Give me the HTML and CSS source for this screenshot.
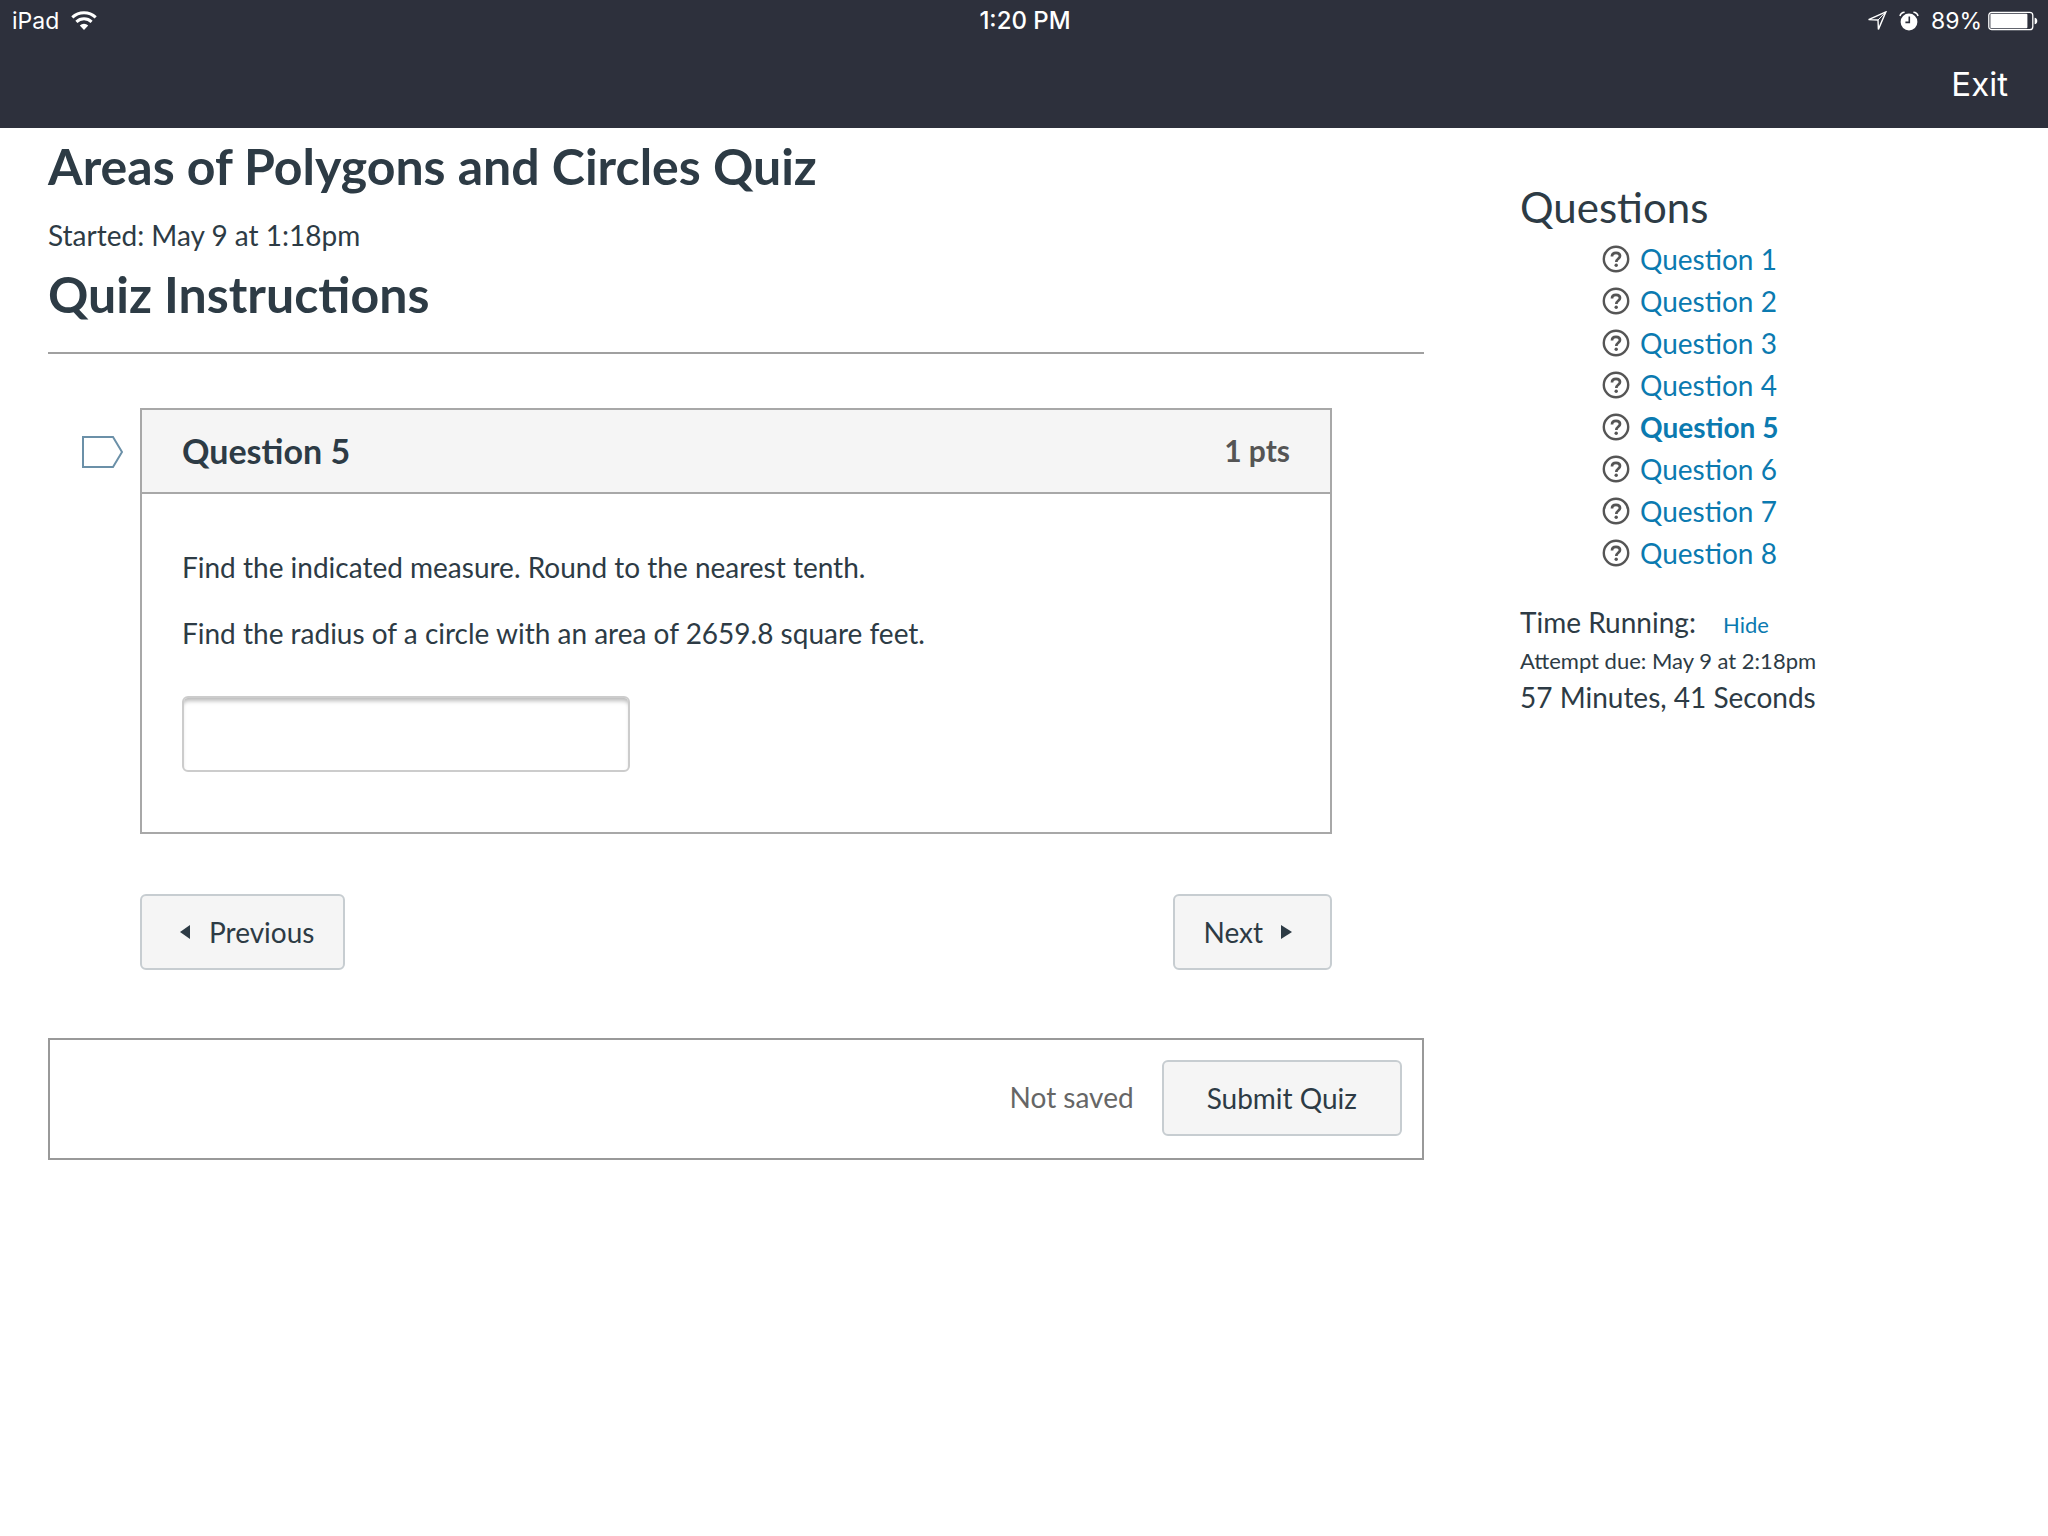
FILE: index.html
```
<!DOCTYPE html>
<html lang="en">
<head>
    <meta charset="UTF-8">
    <meta name="viewport" content="width=device-width, initial-scale=1.0">
    <title>Areas of Polygons and Circles Quiz</title>
    <link rel="stylesheet" href="styles.css">
</head>
<body>
    <svg class="symbols" width="0" height="0" aria-hidden="true">
        <symbol id="help" viewBox="0 0 28 28">
            <circle cx="14" cy="14" r="12.2" fill="none" stroke="#555" stroke-width="2.4"/>
            <path d="M10 11.4C10 9 11.7 7.8 14 7.8s4 1.3 4 3.3c0 2.7-3.7 2.8-3.7 5.9" fill="none" stroke="#555" stroke-width="2.7"/>
            <circle cx="14.2" cy="20.2" r="1.7" fill="#555"/>
        </symbol>
    </svg>

    <header class="top-bar">
        <div class="status">
            <div class="status-left">
                <span>iPad</span>
                <svg class="wifi" width="26" height="20" viewBox="0 0 26 20" aria-hidden="true">
                    <path d="M1.3 6.3a17 17 0 0 1 23.4 0" fill="none" stroke="#fff" stroke-width="3"/>
                    <path d="M5.4 10.8a11 11 0 0 1 15.2 0" fill="none" stroke="#fff" stroke-width="3"/>
                    <path d="M8.8 14.4a6.3 6.3 0 0 1 8.4 0L13 19z" fill="#fff"/>
                </svg>
            </div>
            <span class="clock">1:20 PM</span>
            <div class="status-right">
                <svg width="20" height="20" viewBox="0 0 20 20" aria-hidden="true">
                    <path d="M18.9 .9L1.6 8.6l9.4.4.4 9.4z" fill="none" stroke="#fff" stroke-width="1.4"/>
                    <path d="M18.6 1.2L11 9" stroke="#fff" stroke-width="1"/>
                </svg>
                <svg class="alarm" width="20" height="20" viewBox="0 0 20 20" aria-hidden="true">
                    <circle cx="10" cy="11" r="8.4" fill="#fff"/>
                    <path d="M1 5A5 5 0 0 1 5.6 1.2M19 5a5 5 0 0 0-4.6-3.8" fill="none" stroke="#fff" stroke-width="1.6"/>
                    <path d="M10.3 5.6v5.8H6.4" fill="none" stroke="#2d303c" stroke-width="1.6"/>
                </svg>
                <span>89%</span>
                <svg width="50" height="20" viewBox="0 0 50 20" aria-hidden="true">
                    <rect x=".8" y="1.3" width="44" height="17.4" rx="3" fill="none" stroke="#fff" stroke-width="1.3"/>
                    <rect x="2.4" y="2.8" width="37" height="14.4" rx="1" fill="#fff"/>
                    <path d="M46.6 6.8c1.6 0 2.7 1.4 2.7 3.2s-1.1 3.2-2.7 3.2z" fill="#fff"/>
                </svg>
            </div>
        </div>
        <div class="nav">
            <button class="exit" type="button">Exit</button>
        </div>
    </header>

    <div class="page">
        <main class="quiz">
            <h1>Areas of Polygons and Circles Quiz</h1>
            <p class="started">Started: May 9 at 1:18pm</p>
            <h2>Quiz Instructions</h2>

            <form>
                <div class="question-row">
                    <button class="flag" type="button" aria-label="Flag question">
                        <svg width="41" height="32" viewBox="0 0 41 32" aria-hidden="true">
                            <path d="M1 1h30l9 15-9 15H1z" fill="#fff" stroke="#6b90a8" stroke-width="2"/>
                        </svg>
                    </button>
                    <section class="question">
                        <div class="question-header">
                            <h3>Question 5</h3>
                            <span class="points">1 pts</span>
                        </div>
                        <div class="question-body">
                            <p>Find the indicated measure. Round to the nearest tenth.</p>
                            <p><label for="answer">Find the radius of a circle with an area of 2659.8 square feet.</label></p>
                            <input class="answer" id="answer" type="text">
                        </div>
                    </section>
                </div>

                <div class="pager">
                    <button class="btn btn-prev" type="button">
                        <svg width="10" height="14" viewBox="0 0 10 14" aria-hidden="true"><path d="M10 0v14L0 7z" fill="#2d3b45"/></svg>
                        Previous
                    </button>
                    <button class="btn btn-next" type="button">
                        Next
                        <svg width="11" height="14" viewBox="0 0 11 14" aria-hidden="true"><path d="M0 0v14l11-7z" fill="#2d3b45"/></svg>
                    </button>
                </div>

                <div class="submit-bar">
                    <span class="save-state">Not saved</span>
                    <button class="btn btn-submit" type="submit">Submit Quiz</button>
                </div>
            </form>
        </main>

        <aside class="sidebar">
            <h2>Questions</h2>
            <ul class="question-list">
                <li><svg class="help"><use href="#help"/></svg><a href="#q1">Question 1</a></li>
                <li><svg class="help"><use href="#help"/></svg><a href="#q2">Question 2</a></li>
                <li><svg class="help"><use href="#help"/></svg><a href="#q3">Question 3</a></li>
                <li><svg class="help"><use href="#help"/></svg><a href="#q4">Question 4</a></li>
                <li><svg class="help"><use href="#help"/></svg><a class="current" href="#q5">Question 5</a></li>
                <li><svg class="help"><use href="#help"/></svg><a href="#q6">Question 6</a></li>
                <li><svg class="help"><use href="#help"/></svg><a href="#q7">Question 7</a></li>
                <li><svg class="help"><use href="#help"/></svg><a href="#q8">Question 8</a></li>
            </ul>
            <div class="timer">
                <p>Time Running: <a class="hide" href="#timer">Hide</a></p>
                <p class="due">Attempt due: May 9 at 2:18pm</p>
                <p>57 Minutes, 41 Seconds</p>
            </div>
        </aside>
    </div>
</body>
</html>
```
FILE: styles.css
```
* {
    box-sizing: border-box;
}

body {
    font-family: Lato, sans-serif;
    font-size: 28px;
    line-height: 42px;
    margin: 0;
    background-color: #fff;
    color: #2d3b45;
}

h1, h2, h3, p, ul {
    margin: 0;
    padding: 0;
}

a {
    color: #0b7ab0;
    text-decoration: none;
}

button {
    font: inherit;
    color: inherit;
    cursor: pointer;
}

.symbols {
    display: none;
}

/* top bar */
.top-bar {
    background-color: #2d303c;
    color: #fff;
    font-family: Inter, sans-serif;
}

.status {
    display: grid;
    grid-template-columns: 1fr auto 1fr;
    align-items: center;
    height: 40px;
    padding: 0 10px 0 12px;
    font-size: 23px;
}

.status-left, .status-right {
    display: flex;
    align-items: center;
    gap: 12px;
}

.status-right {
    justify-content: flex-end;
    gap: 6px;
}

.alarm {
    margin: 0 6px;
}

.clock {
    font-size: 24px;
    font-weight: 500;
}

.nav {
    display: flex;
    justify-content: flex-end;
    align-items: center;
    height: 88px;
    padding: 0 40px;
}

.exit {
    padding: 0;
    border: none;
    background: none;
    font-size: 33px;
}

/* page */
.page {
    display: flex;
    gap: 96px;
    padding: 0 48px;
}

.quiz {
    flex: 1;
}

h1, .quiz h2 {
    font-size: 50px;
    font-weight: bold;
    line-height: 64px;
}

h1 {
    padding-top: 6px;
}

.started {
    padding: 16px 0 8px;
}

.quiz h2 {
    padding-bottom: 28px;
    border-bottom: 2px solid #a0a0a0;
    line-height: 60px;
}

.question-row {
    display: flex;
    align-items: flex-start;
    padding: 54px 92px 0 34px;
}

.flag {
    display: flex;
    margin: 28px 17px 0 0;
    padding: 0;
    border: none;
    background: none;
}

.question {
    flex: 1;
    border: 2px solid #a8a8a8;
}

.question-header {
    display: flex;
    justify-content: space-between;
    align-items: center;
    height: 84px;
    padding: 0 40px;
    border-bottom: 2px solid #a8a8a8;
    background-color: #f5f5f5;
}

.question-header h3 {
    font-size: 34px;
}

.points {
    padding-bottom: 2px;
    font-size: 30px;
    font-weight: bold;
    color: #555;
}

.question-body {
    padding: 52px 40px 60px;
}

.question-body p {
    margin-bottom: 24px;
}

.answer {
    display: block;
    width: 448px;
    height: 76px;
    margin-top: 42px;
    padding: 0 16px;
    border: 2px solid #ccc;
    border-radius: 6px;
    box-shadow: inset 0 5px 4px -2px #bbb;
    font: inherit;
    color: inherit;
}

.pager {
    display: flex;
    justify-content: space-between;
    padding: 60px 92px 68px;
}

.btn {
    display: flex;
    align-items: center;
    height: 76px;
    border: 2px solid #c7cdd1;
    border-radius: 6px;
    background-color: #f5f5f5;
}

.btn-prev {
    gap: 19px;
    padding: 0 29px 0 38px;
}

.btn-next {
    gap: 18px;
    padding: 0 38px 0 28px;
}

.btn-submit {
    padding: 0 43px;
}

.submit-bar {
    display: flex;
    justify-content: flex-end;
    align-items: center;
    gap: 28px;
    padding: 20px 20px 22px;
    border: 2px solid #999;
}

.save-state {
    padding-bottom: 3px;
    color: #666;
}

/* sidebar */
.sidebar {
    width: 480px;
    padding-top: 53px;
}

.sidebar h2 {
    font-size: 42px;
    font-weight: normal;
    line-height: 52px;
}

.question-list {
    padding: 5px 0 28px 82px;
    list-style: none;
}

.question-list li {
    display: flex;
    align-items: center;
    gap: 10px;
}

.help {
    width: 28px;
    height: 28px;
}

.current {
    font-weight: bold;
}

.timer {
    line-height: 40px;
}

.hide, .due {
    font-size: 22px;
}

.hide {
    margin-left: 20px;
}

.due {
    line-height: 32px;
}
```
